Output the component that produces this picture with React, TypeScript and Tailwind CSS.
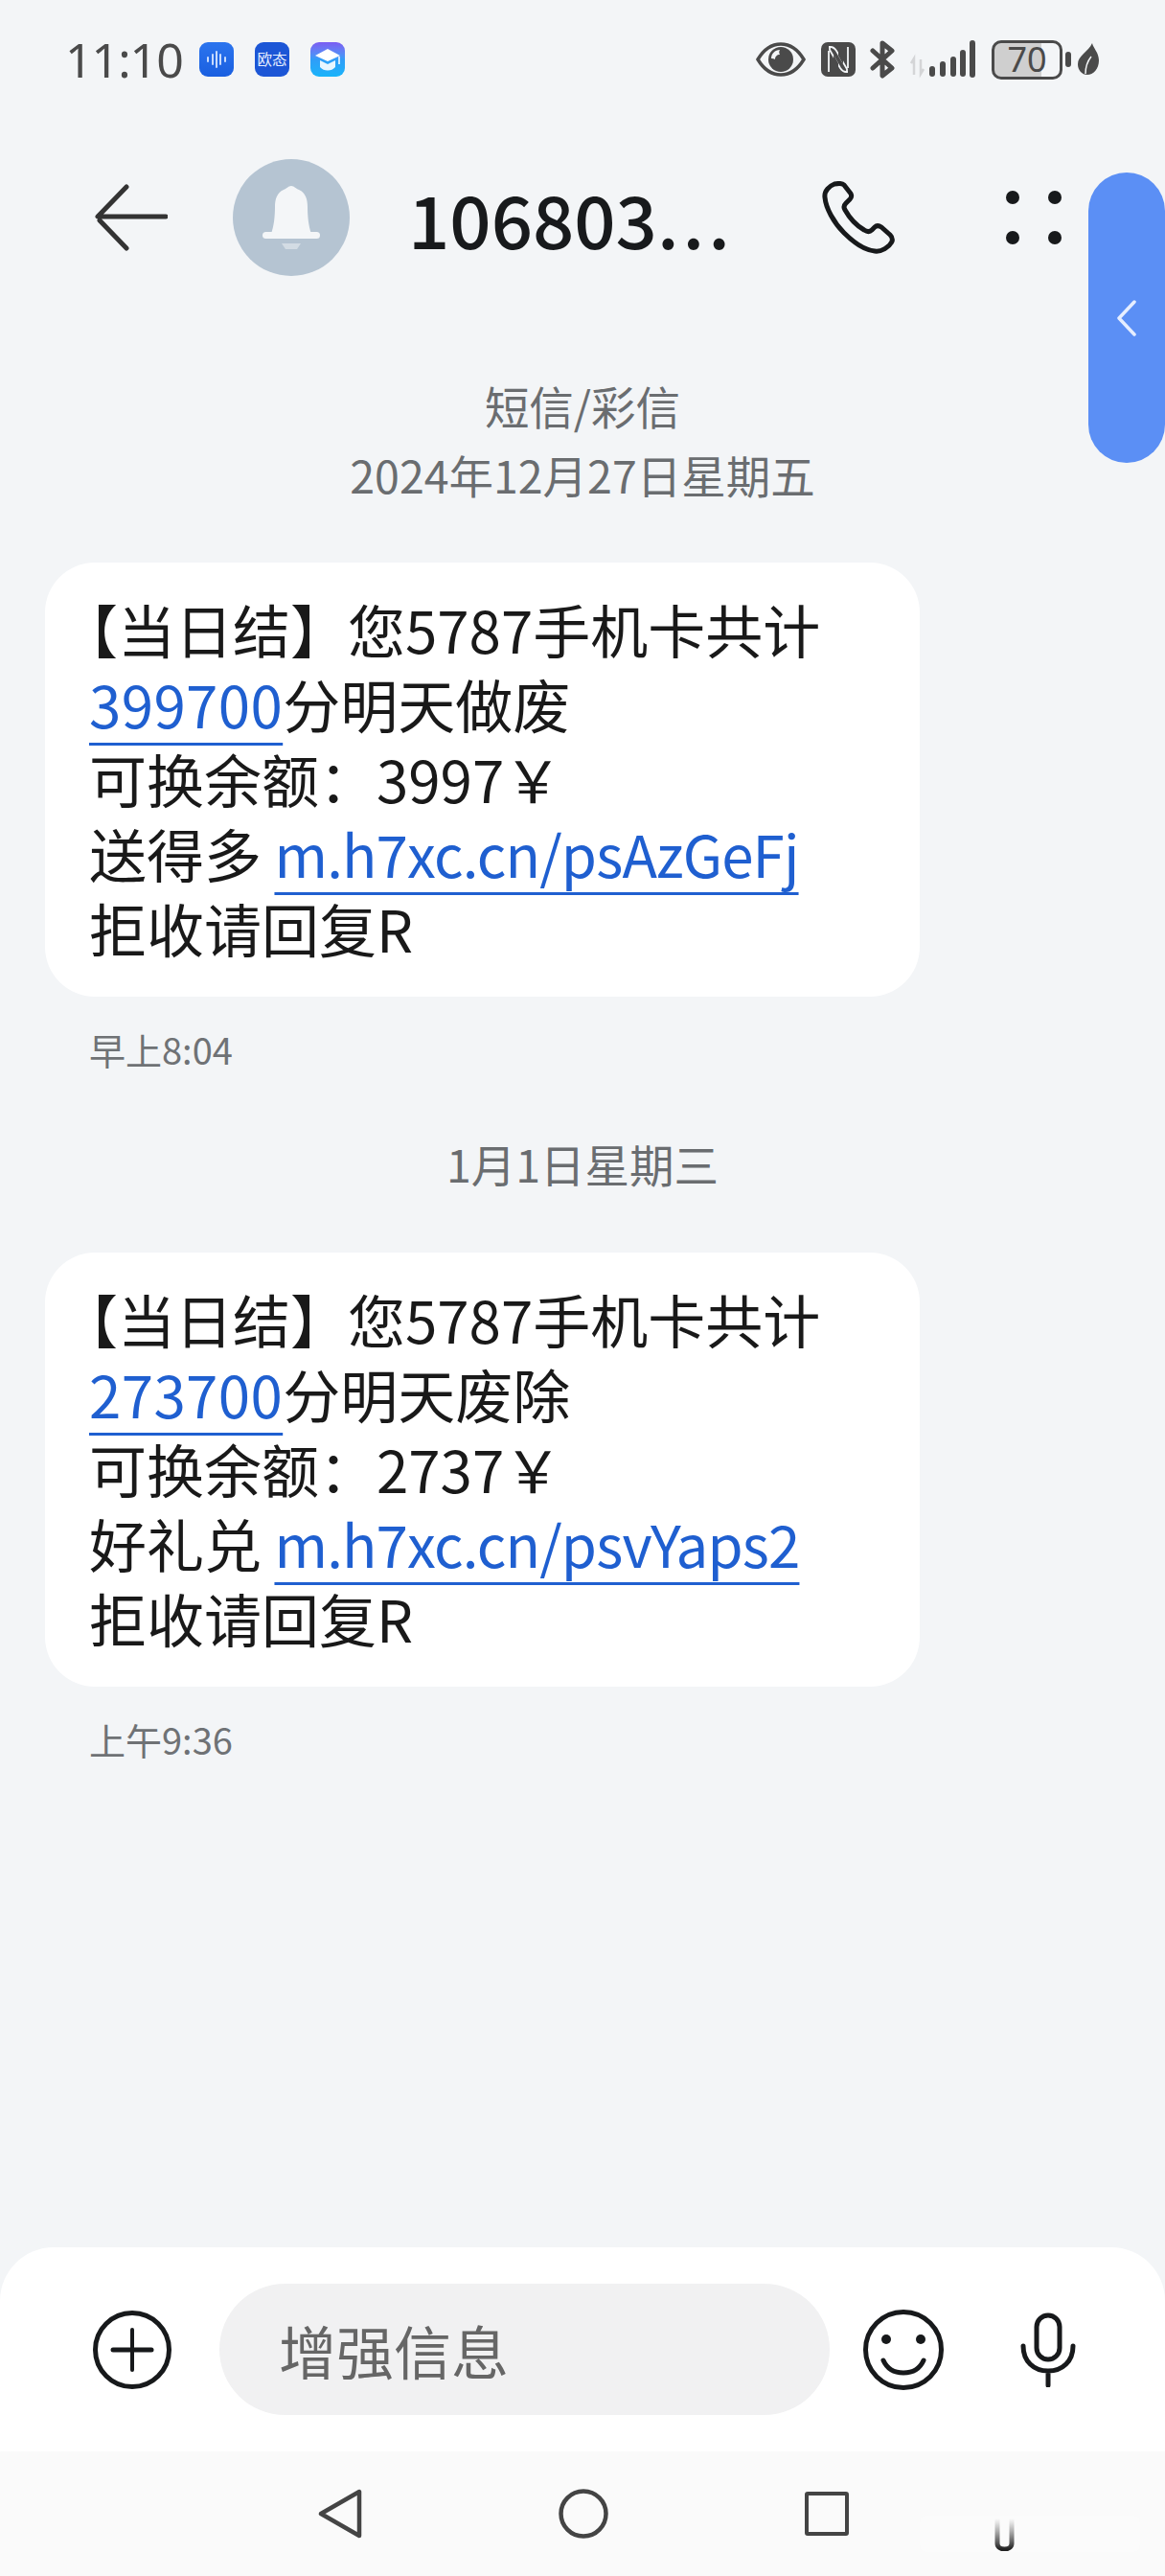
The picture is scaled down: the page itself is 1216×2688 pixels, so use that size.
const cjk = "font-['Noto_Sans_CJK_SC','Noto_Sans',sans-serif]";

function AppIcons() {
  return (
    <div className="flex items-center gap-[22px] ml-[18px]">
      <div className="w-[36px] h-[36px] rounded-[9px] bg-linear-to-b from-[#2b74ee] to-[#1a5fe0] flex items-center justify-center">
        <svg width="22" height="18" viewBox="0 0 22 18" stroke="#dbe8ff" strokeWidth="1.800" strokeLinecap="round">
          <path d="M2 7v4M7 4v10M11 1v16M15 4v10M20 7v4" />
        </svg>
      </div>
      <div className="w-[36px] h-[36px] rounded-[9px] bg-[#1c56d6] flex items-center justify-center text-[15.5px] leading-none text-[#e8f0ff] whitespace-nowrap">
        欧态
      </div>
      <div className="w-[36px] h-[36px] rounded-[9px] bg-linear-to-b from-[#7a5cf2] via-[#2f9df8] to-[#16b4fa] flex items-center justify-center">
        <svg width="28" height="26" viewBox="0 0 28 26">
          <path d="M14 2 27 9 14 15 1 9Z" fill="#fff" />
          <path d="M6 14l8 4 8-4v7c-2 2.500-5 3.500-8 3.500S8 23.500 6 21Z" fill="#e8f6ff" />
          <path d="M26 10v8" stroke="#fff" strokeWidth="1.500" />
        </svg>
      </div>
    </div>
  );
}

function StatusIcons() {
  return (
    <div className="ml-auto mr-[69px] flex items-center">
      <svg width="52" height="36" viewBox="0 0 52 36">
        <path d="M2 18C8 8 16 2 26 2s18 6 24 16c-6 10-14 16-24 16S8 28 2 18Z" fill="none" stroke="#4a4a4a" strokeWidth="3.500" />
        <circle cx="26" cy="18" r="13" fill="#4a4a4a" />
        <path d="M16 17c0-5 4-9 9-9-1 2-1 3 0 5-3 0-5 2-5 5-1-1-3-1-4-1Z" fill="#f3f5f7" />
      </svg>
      <svg className="ml-[16px]" width="36" height="36" viewBox="0 0 36 36">
        <rect width="36" height="36" rx="7" fill="#4a4a4a" />
        <path d="M8 5h2c3 0 4 1 6 4l11 19v3M8 31V9" fill="none" stroke="#f3f5f7" strokeWidth="1.800" />
        <path d="M28 31h-2c-3 0-4-1-6-4L9 8V5M28 5v22" fill="none" stroke="#f3f5f7" strokeWidth="1.800" />
        <path d="M13 13l5 9v6h-5ZM23 23l-5-9V8h5Z" fill="#4a4a4a" />
      </svg>
      <svg className="ml-[15px]" width="26" height="40" viewBox="0 0 26 40" fill="none" stroke="#4a4a4a" strokeWidth="5" strokeLinejoin="round" strokeLinecap="round">
        <path d="M3 11 23 29 13 37V3l10 8L3 29" />
      </svg>
      <svg className="ml-[16px]" width="68" height="40" viewBox="0 0 68 40">
        <path d="M4 36V19l-3 5M11 20v15l3-5" fill="none" stroke="#d4d5d7" strokeWidth="2.500" />
        <rect x="20" y="27" width="6" height="11" rx="3" fill="#4a4a4a" />
        <rect x="31" y="22" width="6" height="16" rx="3" fill="#4a4a4a" />
        <rect x="42" y="17" width="6" height="21" rx="3" fill="#4a4a4a" />
        <rect x="52" y="10" width="6" height="28" rx="3" fill="#4a4a4a" />
        <rect x="62" y="0" width="6" height="39" rx="3" fill="#4a4a4a" />
      </svg>
      <div className="ml-[17px] w-[74px] h-[41px] rounded-[10px] border-[3px] border-[#4a4a4a] bg-[linear-gradient(90deg,#cfcfcf_72%,transparent_72%)] flex items-center justify-center font-['Noto_Sans',sans-serif] text-[36px] leading-none text-[#4a4a4a]">
        70
      </div>
      <div className="ml-[3px] w-[6px] h-[16px] rounded-[3px] bg-[#4a4a4a]" />
      <svg className="ml-[7px]" width="22" height="34" viewBox="0 0 22 34">
        <path d="M15 0c1 5 7 10 7 18 0 9-6 15-12 15C4 33 0 28 0 22 0 13 11 9 15 0Z" fill="#4a4a4a" />
        <path d="M8 32c0-7 2-13 6-18" stroke="#f3f5f7" strokeWidth="1.500" fill="none" />
      </svg>
    </div>
  );
}

function Header() {
  return (
    <div className="h-[206px] flex items-center">
      <svg className="ml-[99px]" width="76" height="70" viewBox="0 0 76 70" fill="none" stroke="#333" strokeWidth="5" strokeLinecap="round" strokeLinejoin="round">
        <path d="M33 3 3 34h71M5 38l28 29" />
      </svg>
      <div className="ml-[68px] w-[122px] h-[122px] rounded-full bg-[#b5c4d2] flex items-center justify-center">
        <svg width="60" height="66" viewBox="0 0 60 66">
          <path d="M30 0c3 0 5 3 8 4 7 3 9 10 9 18 0 9 1 20 4 28H9c3-8 4-19 4-28 0-8 2-15 9-18 3-1 5-4 8-4Z" fill="#f4f6f8" />
          <rect x="0" y="48" width="60" height="7" rx="3.500" fill="#f4f6f8" />
          <path d="M20 60h20l-4 6H24Z" fill="#d3dce4" />
        </svg>
      </div>
      <div className={`ml-[61px] w-[346px] whitespace-nowrap text-[76px] leading-none font-medium text-[#181a1c] ${cjk}`}>
        106803<span className="tracking-[4px]">...</span>
      </div>
      <svg className="ml-[86px]" width="76" height="76" viewBox="0 0 76 76" fill="none" stroke="#17191b" strokeWidth="5" strokeLinejoin="round">
        <path d="M13 3c-5 2-11 7-10 14 1 11 9 26 20 37s21 18 32 19c7 1 15-4 18-10 1-3 0-5-2-7l-9-8c-3-2-5-2-7 0l-3 3c-2 2-5 2-8 0-7-4-15-12-20-21-2-3-1-5 1-7l4-4c2-2 2-4 1-6l-7-9c-2-2-5-2-10-1Z" />
      </svg>
      <div className="ml-[116px] grid grid-cols-2 gap-x-[30px] gap-y-[28px]">
        <div className="w-[14px] h-[14px] rounded-full bg-[#17191b]" />
        <div className="w-[14px] h-[14px] rounded-full bg-[#17191b]" />
        <div className="w-[14px] h-[14px] rounded-full bg-[#17191b]" />
        <div className="w-[14px] h-[14px] rounded-full bg-[#17191b]" />
      </div>
    </div>
  );
}

function Bubble({ amount, suffix, balance, label, url }: { amount: string, suffix: string, balance: string, label: string, url: string }) {
  const linkClass = "text-[#1f5fd0] underline decoration-[3px] underline-offset-[15px] [text-decoration-skip-ink:none]";
  return (
    <div className="ml-[47px] w-[913px] h-[453px] rounded-[52px] bg-white pl-[46px] pt-[30px] text-[60px] leading-[78px] text-[#191919] whitespace-nowrap [text-spacing-trim:trim-start]">
      <div>【当日结】您5787手机卡共计</div>
      <div><span className={`${linkClass} tracking-[0.4px]`}>{amount}</span>{suffix}</div>
      <div>可换余额：{balance}￥</div>
      <div>{label} <span className={`${linkClass} tracking-[-0.85px]`}>{url}</span></div>
      <div>拒收请回复R</div>
    </div>
  );
}

function Composer() {
  return (
    <div className="mt-auto h-[213px] rounded-t-[56px] bg-white flex items-center">
      <svg className="ml-[97px]" width="82" height="82" viewBox="0 0 82 82" fill="none" stroke="#17191b" strokeLinecap="round">
        <circle cx="41" cy="41" r="38.500" strokeWidth="5" />
        <path d="M21 41h40" strokeWidth="5" />
        <path d="M41 20v42" strokeWidth="4" />
      </svg>
      <div className="ml-[50px] w-[637px] h-[137px] rounded-full bg-[#f1f1f2] pl-[62px] flex items-center text-[60px] leading-none text-[#666666]">
        增强信息
      </div>
      <svg className="ml-[35px]" width="84" height="84" viewBox="0 0 84 84" fill="none" stroke="#17191b" strokeLinecap="round">
        <circle cx="42" cy="42" r="39.500" strokeWidth="5" />
        <circle cx="24" cy="31" r="5" fill="#17191b" stroke="none" />
        <circle cx="60" cy="31" r="5" fill="#17191b" stroke="none" />
        <path d="M21 53c4 9 12 13 21 13s17-4 21-13" strokeWidth="5" />
      </svg>
      <svg className="ml-[80px]" width="58" height="78" viewBox="0 0 58 78" fill="none" stroke="#17191b" strokeWidth="5" strokeLinecap="round">
        <rect x="17" y="3" width="24" height="46" rx="12" />
        <path d="M3 35c0 16 11 26 26 26s26-10 26-26M29 61v15" />
      </svg>
    </div>
  );
}

function NavBar() {
  return (
    <div className="relative h-[130px] bg-[#fafafa] flex items-start pt-[39px]">
      <svg className="ml-[332px]" width="46" height="52" viewBox="0 0 46 52" fill="none" stroke="#444" strokeWidth="4.500" strokeLinejoin="round">
        <path d="M43 3v46L3 26Z" />
      </svg>
      <svg className="ml-[205px]" width="52" height="52" viewBox="0 0 52 52" fill="none" stroke="#444" strokeWidth="4.500">
        <circle cx="26" cy="26" r="23.500" />
      </svg>
      <div className="ml-[205px] mt-[3px] w-[46px] h-[46px] rounded-[3px] border-[4.500px] border-[#444]" />
      {/* faint watermark left over in the corner */}
      <div className="absolute left-[960px] top-[67px] w-[230px] h-[38px] bg-white/30 blur-[3px]" />
      <svg className="absolute left-[1038px] top-[70px]" width="21" height="34" viewBox="0 0 21 34" fill="none">
        <defs>
          <linearGradient id="mark" x1="0" y1="0" x2="0" y2="1">
            <stop offset="0" stopColor="#555" stopOpacity="0" />
            <stop offset="1" stopColor="#222" />
          </linearGradient>
        </defs>
        <path d="M3 0v26c0 4 4 6 7.500 6s7.500-2 7.500-6V0" stroke="url(#mark)" strokeWidth="5" />
      </svg>
    </div>
  );
}

export default function App() {
  return (
    <div className={`relative w-[1216px] h-[2688px] overflow-hidden bg-[#f3f5f7] flex flex-col ${cjk}`}>
      <div className="h-[124px] flex items-center">
        <span className="ml-[68px] w-[122px] font-['Noto_Sans',sans-serif] text-[50px] tracking-[-1px] leading-none text-[#4a4a4a]">11:10</span>
        <AppIcons />
        <StatusIcons />
      </div>
      <Header />

      <div className="mt-[57px] text-center text-[46.5px] leading-[72px] text-[#6a6d70]">
        <div>短信/彩信</div>
        <div>2024年12月27日星期五</div>
      </div>
      <div className="mt-[56px]">
        <Bubble amount="399700" suffix="分明天做废" balance="3997" label="送得多" url="m.h7xc.cn/psAzGeFj" />
      </div>
      <div className="mt-[30px] ml-[93px] text-[38px] leading-[50px] text-[#6f7275]">早上8:04</div>

      <div className="mt-[58px] text-center text-[46.5px] leading-[72px] text-[#6a6d70]">1月1日星期三</div>
      <div className="mt-[57px]">
        <Bubble amount="273700" suffix="分明天废除" balance="2737" label="好礼兑" url="m.h7xc.cn/psvYaps2" />
      </div>
      <div className="mt-[30px] ml-[93px] text-[38px] leading-[50px] text-[#6f7275]">上午9:36</div>

      <Composer />
      <NavBar />

      <div className="absolute right-0 top-[180px] w-[80px] h-[303px] rounded-[40px] bg-[#5b8ff5] flex items-center justify-center">
        <svg width="22" height="38" viewBox="0 0 22 38" fill="none" stroke="#e6eeff" strokeWidth="3.500" strokeLinecap="round" strokeLinejoin="round">
          <path d="M19 2 3 19l16 17" />
        </svg>
      </div>
    </div>
  );
}
